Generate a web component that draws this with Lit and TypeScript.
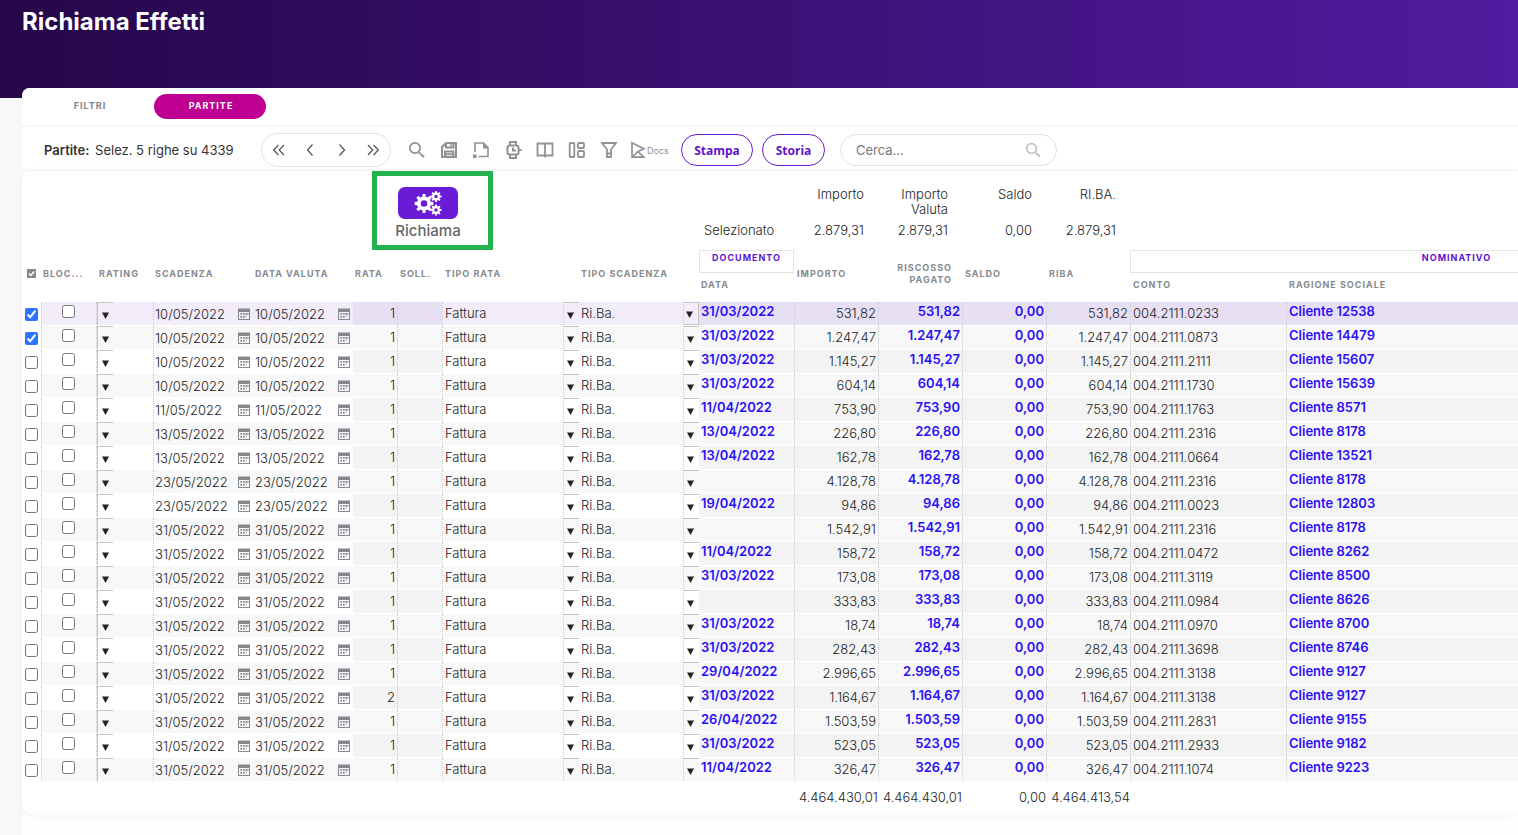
import { LitElement, html, css, svg } from "lit";
import { customElement } from "lit/decorators.js";
import { classMap } from "lit/directives/class-map.js";

interface Partita {
  scadenza: string;
  rata: number;
  documento: string;
  importo: string;
  conto: string;
  cliente: string;
}

const r = (
  scadenza: string,
  documento: string,
  importo: string,
  conto: string,
  cliente: string,
  rata = 1
): Partita => ({ scadenza, rata, documento, importo, conto, cliente });

const PARTITE: Partita[] = [
  r("10/05/2022", "31/03/2022", "531,82", "004.2111.0233", "Cliente 12538"),
  r("10/05/2022", "31/03/2022", "1.247,47", "004.2111.0873", "Cliente 14479"),
  r("10/05/2022", "31/03/2022", "1.145,27", "004.2111.2111", "Cliente 15607"),
  r("10/05/2022", "31/03/2022", "604,14", "004.2111.1730", "Cliente 15639"),
  r("11/05/2022", "11/04/2022", "753,90", "004.2111.1763", "Cliente 8571"),
  r("13/05/2022", "13/04/2022", "226,80", "004.2111.2316", "Cliente 8178"),
  r("13/05/2022", "13/04/2022", "162,78", "004.2111.0664", "Cliente 13521"),
  r("23/05/2022", "", "4.128,78", "004.2111.2316", "Cliente 8178"),
  r("23/05/2022", "19/04/2022", "94,86", "004.2111.0023", "Cliente 12803"),
  r("31/05/2022", "", "1.542,91", "004.2111.2316", "Cliente 8178"),
  r("31/05/2022", "11/04/2022", "158,72", "004.2111.0472", "Cliente 8262"),
  r("31/05/2022", "31/03/2022", "173,08", "004.2111.3119", "Cliente 8500"),
  r("31/05/2022", "", "333,83", "004.2111.0984", "Cliente 8626"),
  r("31/05/2022", "31/03/2022", "18,74", "004.2111.0970", "Cliente 8700"),
  r("31/05/2022", "31/03/2022", "282,43", "004.2111.3698", "Cliente 8746"),
  r("31/05/2022", "29/04/2022", "2.996,65", "004.2111.3138", "Cliente 9127"),
  r("31/05/2022", "31/03/2022", "1.164,67", "004.2111.3138", "Cliente 9127", 2),
  r("31/05/2022", "26/04/2022", "1.503,59", "004.2111.2831", "Cliente 9155"),
  r("31/05/2022", "31/03/2022", "523,05", "004.2111.2933", "Cliente 9182"),
  r("31/05/2022", "11/04/2022", "326,47", "004.2111.1074", "Cliente 9223"),
];

/* Outline of a cog with square teeth, centred on (cx, cy). */
function cog(cx: number, cy: number, teeth: number, outer: number, inner: number, hole: number) {
  const pts: string[] = [];
  const step = (Math.PI * 2) / teeth;
  for (let i = 0; i < teeth; i++) {
    const a = i * step;
    const corners: [number, number][] = [
      [inner, -0.3],
      [outer, -0.2],
      [outer, 0.2],
      [inner, 0.3],
    ];
    for (const [rad, k] of corners) {
      pts.push(`${(cx + rad * Math.cos(a + k * step)).toFixed(2)} ${(cy + rad * Math.sin(a + k * step)).toFixed(2)}`);
    }
  }
  const ring = `M${cx - hole} ${cy}a${hole} ${hole} 0 1 0 ${hole * 2} 0a${hole} ${hole} 0 1 0 ${-hole * 2} 0z`;
  return svg`<path fill-rule="evenodd" d="M${pts.join("L")}z${ring}"></path>`;
}

const TOOLS = [
  { name: "Cerca", icon: svg`<circle cx="7" cy="7" r="5.2"></circle><path d="M11 11.5l1.500 1.500M13 13.2l3 2.800" stroke-width="2.200"></path>` },
  { name: "Salva", icon: svg`<path d="M2 17V6l4-4h10v15M1 16h16M6 2v4.500h7.500V2M5 16v-5.500h8.500V16M5 13.300h8.500" stroke-width="2"></path><path d="M11 3v2.500" stroke-width="1.500"></path>` },
  { name: "Nuovo", icon: svg`<path d="M3 11V2h8.500l4.500 4.500V15.500H6.500" stroke-width="1.600"></path><path d="M11 1.500L17 7.500H11z" fill="#929292" stroke="none"></path><path d="M1 13.500h3.500V17H1z" fill="#929292" stroke="none"></path>` },
  { name: "Timer", icon: svg`<rect x="3.500" y="4.500" width="11" height="9" rx="2" stroke-width="2"></rect><path d="M6 4V1h6v3M6 14v3h6v-3M9 6.500v3h3M15 9h2.500" stroke-width="2"></path>` },
  { name: "Colonne", icon: svg`<path d="M1.500 2.500h15v12h-15zM9 2.500V16.500" stroke-width="1.800"></path>` },
  { name: "Layout", icon: svg`<rect x="1.700" y="2" width="4.600" height="14" rx="0.800"></rect><rect x="10" y="2" width="6" height="5" rx="1"></rect><rect x="10" y="10" width="6" height="6" rx="1"></rect>` },
  { name: "Filtro", icon: svg`<path d="M2 2h14l-5 6.500V16H7V8.500zM7 12.500h4" stroke-width="1.800"></path>` },
];

const chevron = (double: boolean, left: boolean) => html`
  <svg class="chev" viewBox="0 0 14 14" aria-hidden="true">
    <g transform=${left ? "" : "translate(14 0) scale(-1 1)"}>
      ${double
        ? svg`<path d="M6.500 2L1.700 7l4.800 5M12 2L7.200 7l4.800 5"></path>`
        : svg`<path d="M9.500 1.500L4.500 7l5 5.500"></path>`}
    </g>
  </svg>`;

const arrow = html`<svg class="tri" viewBox="0 0 7 7" aria-hidden="true"><path d="M0 0.500h7L3.500 7z"></path></svg>`;

@customElement("app-root")
export class AppRoot extends LitElement {
  static styles = css`
    :host {
      display: block;
      min-height: 100vh;
      overflow: hidden;
      background: linear-gradient(90deg, #f8f8f8 22px, #fefefe 22px);
      font-family: Inter, "Liberation Sans", sans-serif;
      font-size: 13px;
      font-weight: 300;
      line-height: 15px;
      color: #222222;
    }
    * { box-sizing: border-box; }
    button, input, select {
      font: inherit;
      color: inherit;
      margin: 0;
      padding: 0;
      border: 0;
      background: none;
    }
    .hero {
      height: 98px;
      padding: 7px 22px;
      background: linear-gradient(90deg, #250749, #521ba0);
    }
    h1 {
      margin: 0;
      color: #ffffff;
      font-size: 24px;
      line-height: 29px;
      font-weight: 700;
    }
    .page { margin: -10px 0 0 22px; }
    .panel { background: #ffffff; border-top-left-radius: 8px; }
    .strips { background: #f8f8f8; border-top-left-radius: 8px; }
    .tabs { display: flex; gap: 10px; padding: 6px 12px; margin-bottom: 2px; }
    .tab {
      height: 25px;
      border-radius: 13px;
      width: 110px;
      padding: 0 0 2px 2px;
      color: #808488;
      font-size: 9px;
      font-weight: 700;
      letter-spacing: 1px;
    }
    .tab.on { width: 112px; background: #bd0092; color: #ffffff; }
    .tools {
      display: flex;
      align-items: center;
      height: 42px;
      padding: 6px 22px 2px;
      margin-bottom: 2px;
    }
    .count { width: 217px; font-weight: 400; color: #333333; white-space: nowrap; }
    .count b { font-weight: 600; margin-right: 2px; }
    .pager {
      display: flex;
      justify-content: space-between;
      align-items: center;
      width: 130px;
      height: 34px;
      padding: 0 9px;
      margin-right: 10px;
      border: 1px solid #e2e2e2;
      border-radius: 17px;
    }
    .pager button { display: grid; place-items: center; width: 16px; height: 24px; }
    .chev { width: 14px; height: 14px; fill: none; stroke: #55585e; stroke-width: 1.3; }
    .tool { display: grid; place-items: center; width: 32px; height: 32px; }
    .tool svg, .docs svg { width: 18px; height: 18px; fill: none; stroke: #929292; stroke-width: 1.8; }
    .docs {
      display: flex;
      align-items: center;
      width: 46px;
      height: 32px;
      margin-right: 10px;
      padding-left: 4px;
      font-size: 9px;
      font-weight: 400;
      color: #929292;
    }
    .action {
      height: 32px;
      width: 72px;
      border: 1px solid #671bd3;
      border-radius: 16px;
      color: #5f14cf;
      font-family: "Open Sans", "Noto Sans", sans-serif;
      font-size: 12px;
      font-weight: 700;
    }
    .action + .action { width: 63px; margin-left: 9px; }
    .search {
      display: flex;
      align-items: center;
      width: 217px;
      height: 32px;
      margin-left: 15px;
      padding: 0 15px;
      border: 1px solid #e2e2e2;
      border-radius: 16px;
    }
    .search input { flex: 1; min-width: 0; outline: 0; font-weight: 400; }
    .search input::placeholder { color: #777777; opacity: 1; }
    .search svg { width: 16px; height: 16px; fill: none; stroke: #c2c2c2; stroke-width: 1.8; }
    .body { overflow: hidden; padding-bottom: 1px; border-bottom-left-radius: 8px; box-shadow: 0 2px 12px #0000000a; }
    .top { display: flex; align-items: flex-start; height: 79px; padding-left: 350px; }
    .mark {
      flex: none;
      width: 121px;
      height: 79px;
      padding-top: 11px;
      padding-right: 9px;
      margin-right: 211px;
      border: 5px solid #22b14c;
    }
    .call {
      display: grid;
      justify-items: center;
      gap: 3px;
      margin: 0 auto;
      font-size: 15px;
      line-height: 17px;
      font-weight: 500;
      color: #666666;
    }
    .call span { display: grid; place-items: center; width: 60px; height: 32px; border-radius: 7px; background: #6a1bd5; }
    .call svg { width: 28px; height: 28px; fill: #ffffff; }
    table { table-layout: fixed; border-collapse: separate; border-spacing: 0; }
    th, td { padding: 0; text-align: left; }
    .sum { flex: none; width: 412px; margin-top: 16px; }
    .sum th { font-weight: 300; vertical-align: top; height: 36px; text-align: right; }
    .sum td { text-align: right; height: 15px; }
    .sum tr > :first-child { text-align: left; width: 76px; }
    .grid { width: 1761px; }
    .grid thead th {
      padding: 0 0 5px 2px;
      color: #85898f;
      font-size: 9px;
      line-height: 12px;
      font-weight: 700;
      letter-spacing: 1px;
      white-space: nowrap;
      text-transform: uppercase;
    }
    .grid thead tr:first-child { height: 23px; }
    .grid thead tr:last-child { height: 29px; }
    .grid thead th.in { padding-left: 3px; }
    .grid thead th.end { text-align: right; padding-right: 10px; white-space: normal; }
    .grid thead th.group {
      padding: 1px 0 0;
      text-align: center;
      vertical-align: top;
      border: 1px solid #e4e4e4;
      color: #5f14cf;
    }
    .allbox { display: grid; }
    .allbox > * { grid-area: 1 / 1; width: 9px; height: 9px; margin-left: 3px; }
    .all { display: block; appearance: none; background: #85898f; }
    .allbox svg { fill: none; stroke: #ffffff; stroke-width: 1.5; pointer-events: none; }
    .rows tr { height: 24px; }
    .rows td { border-bottom: 1px solid #ffffff; height: 24px; white-space: nowrap; }
    .rows tr:nth-child(odd) td.ro { background: #f3f3f3; }
    .rows tr:nth-child(even) td { background: #f8f8f8; }
    .rows tr.cur td { background: #f3edfb; }
    .rows tr.cur td.ro { background: #e7dff4; }
    .rows tr td.sel, .rows tr.cur td.sel { background: #ffffff; }
    .rows td.in { border-left: 1px dotted #cccccc; }
    .rows td.num { text-align: right; padding-right: 2px; }
    .rows td.pad { padding-left: 2px; }
    .sel input { display: block; width: 13px; height: 13px; margin: 2px 0 0 3px; accent-color: #2874ff; }
    .rows td.blk { border-right: 1px dotted #cccccc; padding-right: 1px; }
    .blk input { display: block; width: 13px; height: 13px; margin: -4px auto 0; }
    .date { display: flex; align-items: center; justify-content: space-between; padding: 0 3px 0 1px; }
    .noline { padding-left: 1px; }
    .date input { width: 76px; height: 20px; }
    .date button { width: 12px; height: 12px; }
    .cal { display: block; width: 12px; height: 12px; fill: #85898f; }
    .dd { display: grid; grid-template-columns: minmax(0, 1fr) 16px; height: 23px; }
    .dd select {
      grid-area: 1 / 1 / 2 / 3;
      appearance: none;
      min-width: 0;
      width: 100%;
      height: 23px;
      padding: 0 16px 0 2px;
      outline: 0;
    }
    .arr {
      grid-area: 1 / 2;
      display: grid;
      place-items: center;
      padding: 2px 3px 0 0;
      border-top: 1px solid #c4c4c4;
      border-left: 1px dotted #cccccc;
      pointer-events: none;
    }
    .rate .dd { width: 16px; }
    .rate select { padding: 0; }
    .rate .arr { padding-right: 0; border-left: 1px solid #c4c4c4; }
    .focus .arr { border-right: 1px solid #c4c4c4; border-bottom: 1px solid #c4c4c4; }
    .tri { width: 7px; height: 7px; fill: #222222; }
    .rows a {
      display: block;
      margin-top: -4px;
      color: #2a10f5;
      font-weight: 600;
      text-decoration: none;
    }
    tfoot td { height: 30px; text-align: right; vertical-align: middle; }
  `;

  private select(label: string, value: string) {
    return html`<div class="dd">
      <select aria-label=${label}><option>${value}</option></select>
      <span class="arr">${arrow}</span>
    </div>`;
  }

  private date(label: string, value: string) {
    return html`<div class="date">
      <input type="text" aria-label=${label} .value=${value} />
      <button aria-label="Apri calendario">
        <svg class="cal" viewBox="0 0 12 12">
          <path fill-rule="evenodd" d="M0 0.500h12V12H0zM1 4v7h10V4z"></path>
          <path d="M5 5h1.700v1.700H5zM7.500 5h1.700v1.700H7.500zM9.500 5h1v1.700h-1zM2.300 5H4v1.700H2.300zM2.300 8H4v1.700H2.300zM5 8h1.700v1.700H5zM7.500 7.500h1.200v1H7.500z"></path>
        </svg>
      </button>
    </div>`;
  }

  private row(p: Partita, i: number) {
    return html`<tr class=${classMap({ cur: i === 0 })}>
      <td class="sel"><input type="checkbox" aria-label="Seleziona riga" ?checked=${i < 2} /></td>
      <td class="in blk"><input type="checkbox" aria-label="Bloccato" /></td>
      <td class="rate">${this.select("Rating", "")}</td>
      <td class="in">${this.date("Scadenza", p.scadenza)}</td>
      <td class="noline">${this.date("Data valuta", p.scadenza)}</td>
      <td class="ro num">${p.rata}</td>
      <td class="ro in"></td>
      <td class="in">${this.select("Tipo rata", "Fattura")}</td>
      <td class=${classMap({ focus: i === 0 })}>${this.select("Tipo scadenza", "Ri.Ba.")}</td>
      <td class="ro pad">${p.documento ? html`<a href="#">${p.documento}</a>` : ""}</td>
      <td class="ro in num">${p.importo}</td>
      <td class="ro in num"><a href="#">${p.importo}</a></td>
      <td class="ro in num"><a href="#">0,00</a></td>
      <td class="ro in num">${p.importo}</td>
      <td class="ro in pad">${p.conto}</td>
      <td class="ro in pad"><a href="#">${p.cliente}</a></td>
    </tr>`;
  }

  render() {
    const widths = [19, 56, 56, 100, 100, 44, 45, 137, 120, 95, 84, 84, 84, 84, 156, 497];
    return html`
      <header class="hero"><h1>Richiama Effetti</h1></header>
      <main class="page">
        <div class="strips">
          <nav class="panel tabs">
            <button class="tab">FILTRI</button>
            <button class="tab on">PARTITE</button>
          </nav>
          <div class="panel tools">
            <div class="count"><b>Partite:</b> Selez. 5 righe su 4339</div>
            <div class="pager">
              <button aria-label="Prima pagina">${chevron(true, true)}</button>
              <button aria-label="Pagina precedente">${chevron(false, true)}</button>
              <button aria-label="Pagina successiva">${chevron(false, false)}</button>
              <button aria-label="Ultima pagina">${chevron(true, false)}</button>
            </div>
            ${TOOLS.map((t) => html`<button class="tool" aria-label=${t.name}><svg viewBox="0 0 18 18">${t.icon}</svg></button>`)}
            <button class="docs">
              <svg viewBox="0 0 18 18"><path d="M3 1.800V16.200H14.800L9 10.500 14.800 7.800zM3 16.200L9 10.500" stroke-width="1.700"></path></svg>Docs
            </button>
            <button class="action">Stampa</button>
            <button class="action">Storia</button>
            <label class="search">
              <input type="text" aria-label="Cerca" placeholder="Cerca..." />
              <svg viewBox="0 0 16 16"><circle cx="6.500" cy="6.500" r="4.800"></circle><path d="M10.500 10.500l1.500 1.500M12 12l2.800 2.500"></path></svg>
            </label>
          </div>
          <section class="panel body">
            <div class="top">
              <div class="mark">
                <button class="call">
                  <span><svg viewBox="0 0 28 28">
                    ${cog(10, 14.5, 8, 9.5, 7, 3.3)}${cog(22, 7.5, 8, 5.6, 4, 1.8)}${cog(22, 21, 8, 5.6, 4, 1.8)}
                  </svg></span>
                  Richiama
                </button>
              </div>
              <table class="sum">
                <tr><th></th><th>Importo</th><th>Importo<br />Valuta</th><th>Saldo</th><th>RI.BA.</th></tr>
                <tr><td>Selezionato</td><td>2.879,31</td><td>2.879,31</td><td>0,00</td><td>2.879,31</td></tr>
              </table>
            </div>
            <table class="grid">
              <colgroup>${widths.map((w) => html`<col width=${w} />`)}</colgroup>
              <thead>
                <tr>
                  <th rowspan="2"><span class="allbox"><input class="all" type="checkbox" aria-label="Seleziona tutto" checked /><svg viewBox="0 0 9 9"><path d="M1.800 4.500l2 2 3.400-4"></path></svg></span></th>
                  <th rowspan="2">Bloc...</th>
                  <th rowspan="2">Rating</th>
                  <th rowspan="2">Scadenza</th>
                  <th rowspan="2">Data valuta</th>
                  <th rowspan="2">Rata</th>
                  <th rowspan="2" class="in">Soll.</th>
                  <th rowspan="2" class="in">Tipo rata</th>
                  <th rowspan="2">Tipo scadenza</th>
                  <th class="group">Documento</th>
                  <th rowspan="2" class="in">Importo</th>
                  <th rowspan="2" class="end">Riscosso Pagato</th>
                  <th rowspan="2" class="in">Saldo</th>
                  <th rowspan="2" class="in">Riba</th>
                  <th colspan="2" class="group">Nominativo</th>
                </tr>
                <tr>
                  <th>Data</th>
                  <th class="in">Conto</th>
                  <th class="in">Ragione sociale</th>
                </tr>
              </thead>
              <tbody class="rows">${PARTITE.map((p, i) => this.row(p, i))}</tbody>
              <tfoot>
                <tr>
                  <td colspan="10"></td>
                  <td>4.464.430,01</td>
                  <td>4.464.430,01</td>
                  <td>0,00</td>
                  <td>4.464.413,54</td>
                  <td colspan="2"></td>
                </tr>
              </tfoot>
            </table>
          </section>
        </div>
      </main>
    `;
  }
}
